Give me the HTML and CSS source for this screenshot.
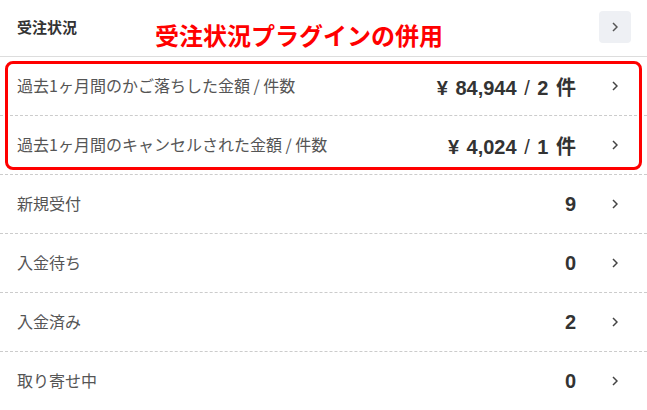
FILE: index.html
```html
<!DOCTYPE html>
<html>

<head>
    <meta charset="UTF-8" />
    <title>受注状況</title>
    <link rel="stylesheet" href="styles.css">
</head>

<body>
    <div class="card">
        <div class="card-header">
            <h2 class="card-title">受注状況</h2>
            <span class="note">受注状況プラグインの併用</span>
            <button class="more-btn">
                <svg width="6" height="10" viewBox="0 0 6 10"><path d="M1 1l4 4-4 4" fill="none" stroke="#555" stroke-width="1.5"/></svg>
            </button>
        </div>
        <div class="list">
            <div class="highlight"></div>
            <a class="row" href="#">
                <span class="label">過去1ヶ月間のかご落ちした金額 / 件数</span>
                <span class="value">¥ 84,944 <span class="sep">/</span> 2 件</span>
                <svg class="chev" width="6" height="10" viewBox="0 0 6 10"><path d="M1 1l4 4-4 4" fill="none" stroke="#444" stroke-width="1.5"/></svg>
            </a>
            <a class="row" href="#">
                <span class="label">過去1ヶ月間のキャンセルされた金額 / 件数</span>
                <span class="value">¥ 4,024 <span class="sep">/</span> 1 件</span>
                <svg class="chev" width="6" height="10" viewBox="0 0 6 10"><path d="M1 1l4 4-4 4" fill="none" stroke="#444" stroke-width="1.5"/></svg>
            </a>
            <a class="row" href="#">
                <span class="label">新規受付</span>
                <span class="value">9</span>
                <svg class="chev" width="6" height="10" viewBox="0 0 6 10"><path d="M1 1l4 4-4 4" fill="none" stroke="#444" stroke-width="1.5"/></svg>
            </a>
            <a class="row" href="#">
                <span class="label">入金待ち</span>
                <span class="value">0</span>
                <svg class="chev" width="6" height="10" viewBox="0 0 6 10"><path d="M1 1l4 4-4 4" fill="none" stroke="#444" stroke-width="1.5"/></svg>
            </a>
            <a class="row" href="#">
                <span class="label">入金済み</span>
                <span class="value">2</span>
                <svg class="chev" width="6" height="10" viewBox="0 0 6 10"><path d="M1 1l4 4-4 4" fill="none" stroke="#444" stroke-width="1.5"/></svg>
            </a>
            <a class="row" href="#">
                <span class="label">取り寄せ中</span>
                <span class="value">0</span>
                <svg class="chev" width="6" height="10" viewBox="0 0 6 10"><path d="M1 1l4 4-4 4" fill="none" stroke="#444" stroke-width="1.5"/></svg>
            </a>
        </div>
    </div>
</body>

</html>
```

FILE: styles.css
```css
* {
    box-sizing: border-box;
}

body {
    margin: 0;
    background: #fff;
    font-family: "Liberation Sans", "Noto Sans CJK JP", sans-serif;
    color: #333;
}

.card {
    width: 647px;
    height: 410px;
    overflow: hidden;
}

.card-header {
    display: flex;
    align-items: center;
    height: 57px;
    padding: 0 16px 1px 17px;
    border-bottom: 1px solid #ddd;
}

.card-title {
    margin: 0;
    font-family: "Noto Sans CJK JP", sans-serif;
    font-size: 15px;
    font-weight: bold;
    color: #333;
    width: 138px;
    margin-top: -2px;
}

.note {
    flex: 1;
    margin-top: 13px;
    font-size: 24px;
    font-weight: bold;
    color: #ff0000;
}

.more-btn {
    width: 32px;
    height: 32px;
    display: flex;
    align-items: center;
    justify-content: center;
    background: #eef0f4;
    border: none;
    border-radius: 4px;
    padding: 0;
    margin-top: -1px;
}

.list {
    position: relative;
}

.row {
    display: flex;
    align-items: center;
    height: 59px;
    padding: 0 29px 0 17px;
    border-bottom: 1px dashed #ccc;
    text-decoration: none;
}

.label {
    flex: 1;
    font-family: "Noto Sans CJK JP", sans-serif;
    font-size: 16px;
    color: #555;
    margin-top: -3px;
}

.value {
    font-size: 20px;
    font-weight: bold;
    color: #333;
    word-spacing: 2px;
}

.sep {
    font-weight: normal;
}

.chev {
    margin-left: 36px;
}

/* red annotation box over the plugin rows */
.highlight {
    position: absolute;
    left: 5px;
    top: 4px;
    width: 637px;
    height: 109px;
    border: 3px solid #ff0000;
    border-radius: 8px;
    pointer-events: none;
}
```
